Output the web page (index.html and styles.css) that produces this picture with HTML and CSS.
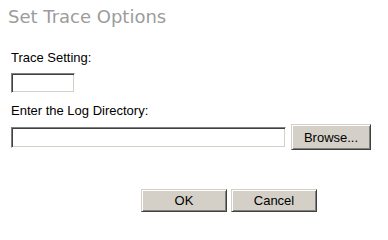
FILE: index.html
```html
<!DOCTYPE html>
<html>
<head>
<meta charset="utf-8">
<link rel="stylesheet" href="styles.css">
</head>
<body>
<div class="page">
  <h1 class="title">Set Trace Options</h1>
  <div class="form">
    <label class="label" for="trace">Trace Setting:</label>
    <input class="field field-small" id="trace" type="text">
    <label class="label label-gap" for="logdir">Enter the Log Directory:</label>
    <div class="row">
      <input class="field field-long" id="logdir" type="text">
      <button class="btn btn-browse" type="button">Browse...</button>
    </div>
    <div class="actions">
      <button class="btn btn-action" type="button">OK</button>
      <button class="btn btn-action" type="button">Cancel</button>
    </div>
  </div>
</div>
</body>
</html>
```
FILE: styles.css
```css
html, body {
  margin: 0;
  padding: 0;
  background: #ffffff;
}
.page {
  width: 388px;
  height: 230px;
  font-family: "Liberation Sans", Arial, sans-serif;
  font-size: 13px;
  color: #000;
}
.title {
  margin: 0;
  padding: 6px 0 0 8px;
  font-family: "DejaVu Sans", Verdana, sans-serif;
  font-weight: normal;
  font-size: 18px;
  line-height: 21px;
  color: #9c9c9c;
}
.form {
  display: flex;
  flex-direction: column;
  align-items: flex-start;
  padding: 23px 0 0 11px;
}
.label {
  display: block;
  line-height: 15px;
  font-size: 13px;
}
.label-gap {
  margin-top: 10px;
}
.field {
  box-sizing: border-box;
  margin: 8px 0 0 0;
  padding: 0 3px;
  background: #fff;
  border: 1px solid;
  border-color: #808080 #ffffff #ffffff #808080;
  box-shadow: inset 1px 1px 0 #404040, inset -1px -1px 0 #d4d0c8;
  font-family: "Liberation Sans", Arial, sans-serif;
  font-size: 13px;
  outline: none;
}
.field-small {
  width: 64px;
  height: 20px;
}
.row {
  display: flex;
  align-items: center;
  gap: 5px;
  margin-top: 6px;
}
.field-long {
  margin: 0;
  width: 275px;
  height: 21px;
}
.btn {
  box-sizing: border-box;
  margin: 0;
  padding: 0;
  background: #d4d0c8;
  border: 1px solid;
  border-color: #d4d0c8 #404040 #404040 #d4d0c8;
  box-shadow: inset 1px 1px 0 #ffffff, inset -1px -1px 0 #808080;
  font-family: "Liberation Sans", Arial, sans-serif;
  font-size: 13px;
  color: #000;
}
.btn-browse {
  width: 80px;
  height: 26px;
}
.actions {
  display: flex;
  gap: 4px;
  margin: 39px 0 0 130px;
}
.btn-action {
  width: 86px;
  height: 23px;
}
```
